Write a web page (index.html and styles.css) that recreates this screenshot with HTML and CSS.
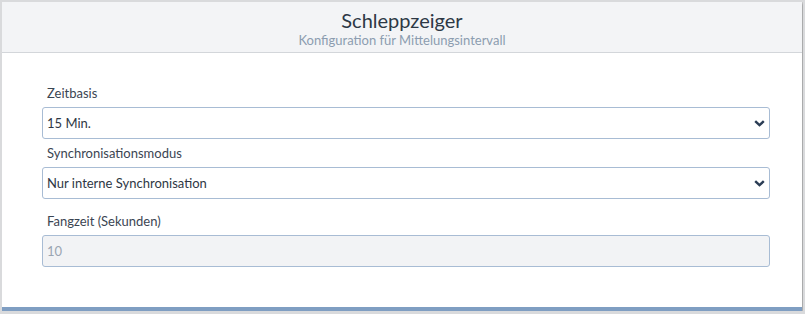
FILE: index.html
```html
<!DOCTYPE html>
<html lang="de">

<head>
    <meta charset="UTF-8">
    <meta name="viewport" content="width=device-width, initial-scale=1.0">
    <title>Schleppzeiger</title>
    <link rel="stylesheet" href="styles.css">
</head>

<body>
    <div class="card">

        <!-- Header with title and subtitle -->
        <div class="cardHeader">
            <div class="title">Schleppzeiger</div>
            <div class="subtitle">Konfiguration für Mittelungsintervall</div>
        </div>

        <div class="cardBody">

            <div class="field">
                <label for="zeitbasis">Zeitbasis</label>
                <div class="selectWrap">
                    <select id="zeitbasis" class="control">
                        <option>15 Min.</option>
                    </select>
                    <svg class="chevron" width="11" height="7" viewBox="0 0 11 7">
                        <path d="M1.2 1.2 L5.5 5.2 L9.8 1.2" fill="none" stroke="#2b3d55" stroke-width="2.4" />
                    </svg>
                </div>
            </div>

            <div class="field">
                <label for="syncMode">Synchronisationsmodus</label>
                <div class="selectWrap">
                    <select id="syncMode" class="control">
                        <option>Nur interne Synchronisation</option>
                    </select>
                    <svg class="chevron" width="11" height="7" viewBox="0 0 11 7">
                        <path d="M1.2 1.2 L5.5 5.2 L9.8 1.2" fill="none" stroke="#2b3d55" stroke-width="2.4" />
                    </svg>
                </div>
            </div>

            <div class="field spaced">
                <label for="fangzeit">Fangzeit (Sekunden)</label>
                <input id="fangzeit" class="control" type="text" value="10" disabled>
            </div>

        </div>
    </div>
</body>

</html>
```

FILE: styles.css
```css
body {
    margin: 2px;
    background-color: #d9dadc;
    font-family: "Lato", "Liberation Sans", sans-serif;
    color: #3b4552;
}

.card {
    width: 800px;
    height: 309px;
    box-sizing: border-box;
    background-color: white;
    border-bottom: 4px solid #7f9ec2;
    box-shadow: 1px 1px 3px rgba(0, 0, 0, 0.35);
}

.cardHeader {
    height: 50px;
    background-color: #f3f4f6;
    border-bottom: 1px solid #d3d6da;
    text-align: center;
}

.title {
    padding-top: 6px;
    font-size: 20px;
    line-height: 24px;
    color: #2d3845;
}

.subtitle {
    font-size: 13px;
    line-height: 16px;
    color: #8c9db0;
}

.cardBody {
    padding: 30px 32px 0 40px;
}

.field {
    margin-bottom: 4px;
}

.field.spaced {
    margin-top: 12px;
}

label {
    display: block;
    padding-left: 5px;
    margin-bottom: 4px;
    font-size: 13px;
    line-height: 20px;
    color: #3b4552;
}

.selectWrap {
    position: relative;
}

.control {
    display: block;
    width: 100%;
    height: 32px;
    box-sizing: border-box;
    padding: 0 4px;
    border: 1px solid #a8bcd4;
    border-radius: 3px;
    background-color: white;
    font-family: inherit;
    font-size: 13px;
    color: #2e3744;
    appearance: none;
    outline: none;
}

input.control:disabled {
    background-color: #f2f3f5;
    color: #9aa5b2;
}

.chevron {
    position: absolute;
    right: 5px;
    top: 13px;
    pointer-events: none;
}
```
